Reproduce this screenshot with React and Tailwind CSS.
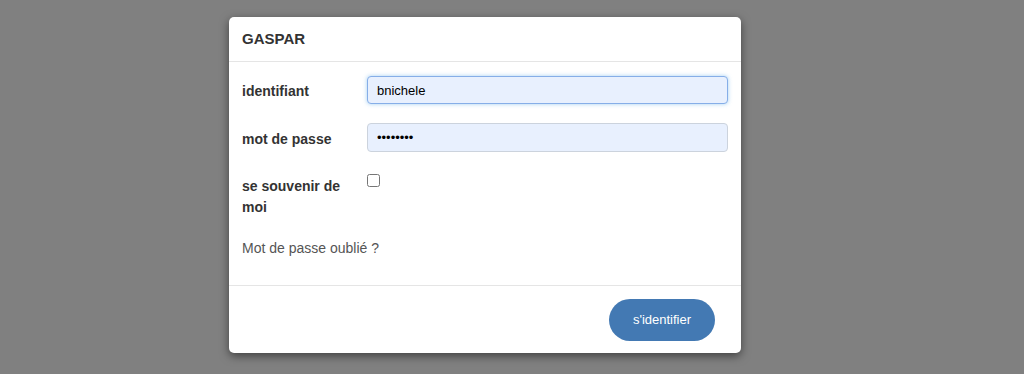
export default function App() {
  return (
    <div className="w-full h-[374px] bg-[#808080] flex font-['Liberation_Sans',Arial,sans-serif] text-[#333]">
      <div className="ml-[229px] mt-[17px] w-[512px] h-[336px] bg-white rounded-[5px] shadow-[0_3px_10px_rgba(0,0,0,0.5)] flex flex-col">
        <div className="h-[45px] px-[13px] flex items-center border-b border-[#e5e5e5]">
          <h4 className="text-[15px] font-bold">GASPAR</h4>
        </div>
        <div className="flex-1 px-[13px] pt-[14px]">
          <div className="flex items-center h-[28px]">
            <label className="w-[125px] pt-[3px] text-[14px] font-bold">identifiant</label>
            <input
              className="flex-1 h-[28px] px-[9px] text-[13px] text-black bg-[#e8f0fe] border border-[#86aee8] rounded-[4px] shadow-[0_0_4px_rgba(102,175,233,0.6)] outline-none"
              defaultValue="bnichele"
            />
          </div>
          <div className="flex items-center h-[29px] mt-[19px]">
            <label className="w-[125px] pt-[3px] text-[14px] font-bold">mot de passe</label>
            <input
              type="password"
              className="flex-1 h-[29px] px-[9px] text-[13px] text-black bg-[#e8f0fe] border border-[#ccd3dd] rounded-[4px] outline-none"
              defaultValue="password"
            />
          </div>
          <div className="flex mt-[22px]">
            <label className="w-[115px] mr-[10px] mt-[2px] text-[14px] font-bold leading-[21px]">se souvenir de moi</label>
            <input type="checkbox" className="w-[13px] h-[13px] mt-0" />
          </div>
          <div className="mt-[20px] text-[14px] text-[#555] leading-[20px]">Mot de passe oublié ?</div>
        </div>
        <div className="h-[68px] border-t border-[#e5e5e5] flex items-center justify-end pr-[26px]">
          <button className="w-[106px] h-[42px] rounded-full bg-[#4379b3] text-white text-[13px]">s'identifier</button>
        </div>
      </div>
    </div>
  );
}
